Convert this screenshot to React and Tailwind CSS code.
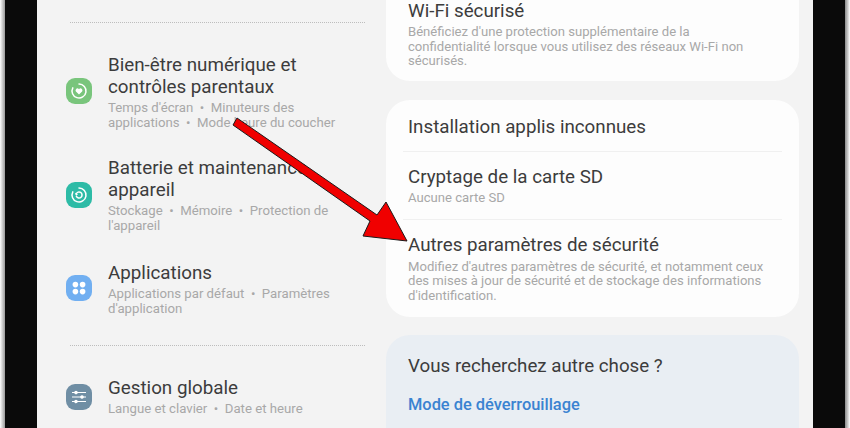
const font = { fontFamily: '"Roboto", sans-serif' };

function Dots({ className }) {
  return <div className={`h-px ml-[33px] w-[295px] border-t border-dotted border-[#bdbdbd] ${className || ""}`} />;
}

function RingIcon({ bg, children }) {
  return (
    <div className={`w-[26px] h-[26px] rounded-[9px] shrink-0 flex items-center justify-center ${bg}`}>
      {children}
    </div>
  );
}

function Item({ title, sub, icon, className, iconClass }) {
  return (
    <div className={`flex items-center pl-[29px] ${className || ""}`}>
      <div className={`w-[42px] shrink-0 ${iconClass || ""}`}>{icon}</div>
      <div className="min-w-0 whitespace-nowrap">
        <div className="text-[18.8px] leading-[22px] text-[#3c3c3c]">{title}</div>
        <div className="text-[13.2px] leading-[14.7px] text-[#a8a8a8] mt-[3px]">{sub}</div>
      </div>
    </div>
  );
}

function Row({ title, sub, border, className, subClass }) {
  return (
    <div className={`mx-[17px] px-[5px] whitespace-nowrap ${border ? "border-t border-[#f0f0f0]" : ""} ${className || ""}`}>
      <div className="text-[18.75px] leading-[22px] text-[#3c3c3c]">{title}</div>
      {sub && <div className={`text-[13.1px] leading-[14.7px] text-[#a8a8a8] ${subClass || "mt-[3px]"}`}>{sub}</div>}
    </div>
  );
}

const Bullet = () => <span className="mx-[6.5px]">•</span>;

export default function App() {
  return (
    <div style={font} className="relative w-[850px] h-[428px] overflow-hidden flex bg-white">
      <div className="w-[5px] bg-gradient-to-r from-white to-[#9a9a9a]" />
      <div className="w-[32px] bg-[#0a0a0a]" />
      <div className="w-[776px] bg-[#f3f3f3] flex">
        <div className="w-[349px] shrink-0 pt-[22px]">
          <Dots />
          <Item
            className="mt-[31px]"
            iconClass="-mt-[3px]"
            title={<>Bien-être numérique et<br />contrôles parentaux</>}
            sub={<>Temps d'écran<Bullet />Minuteurs des<br />applications<Bullet />Mode heure du coucher</>}
            icon={
              <RingIcon bg="bg-[#79c57c]">
                <svg width="18" height="18" viewBox="0 0 18 18" fill="none">
                  <path d="M9 2a7 7 0 1 1-6.2 3.8" stroke="#fff" strokeWidth="1.5" strokeLinecap="round" />
                  <path d="M9 12.4 5.9 9.4a1.9 1.9 0 0 1 2.7-2.6l.4.4.4-.4a1.9 1.9 0 0 1 2.7 2.6z" fill="#fff" />
                </svg>
              </RingIcon>
            }
          />
          <Item
            className="mt-[27px]"
            iconClass="-mt-[2px]"
            title={<>Batterie et maintenance<br />appareil</>}
            sub={<>Stockage<Bullet />Mémoire<Bullet />Protection de<br />l'appareil</>}
            icon={
              <RingIcon bg="bg-[#2dbba6]">
                <svg width="18" height="18" viewBox="0 0 18 18" fill="none">
                  <path d="M9 2a7 7 0 1 1-6.2 3.8" stroke="#fff" strokeWidth="1.5" strokeLinecap="round" />
                  <path d="M6.2 8a3 3 0 1 1 .2 2.4" stroke="#fff" strokeWidth="1.5" strokeLinecap="round" />
                  <path d="M5 6.8 8 8.4 6 9.8z" fill="#fff" />
                </svg>
              </RingIcon>
            }
          />
          <Item
            className="mt-[28px]"
            iconClass="-mt-[2px]"
            title="Applications"
            sub={<>Applications par défaut<Bullet />Paramètres<br />d'application</>}
            icon={
              <RingIcon bg="bg-[#71aff1]">
                <svg width="16" height="16" viewBox="0 0 16 16" fill="#fff">
                  <circle cx="4.4" cy="4.6" r="2.8" />
                  <circle cx="11.6" cy="4.6" r="2.8" />
                  <circle cx="4.4" cy="11.6" r="2.8" />
                  <circle cx="11.6" cy="11.6" r="2.8" />
                </svg>
              </RingIcon>
            }
          />
          <Dots className="mt-[29px]" />
          <Item
            className="mt-[31px]"
            title="Gestion globale"
            sub={<>Langue et clavier<Bullet />Date et heure</>}
            icon={
              <RingIcon bg="bg-[#6f8ea4]">
                <svg width="18" height="18" viewBox="0 0 18 18" fill="none" stroke="#fff" strokeWidth="1.2">
                  <path d="M2 4.5h14M2 9h14M2 13.5h14" />
                  <circle cx="6" cy="4.5" r="1.2" fill="#fff" />
                  <circle cx="12" cy="9" r="1.2" fill="#fff" />
                  <circle cx="6" cy="13.5" r="1.2" fill="#fff" />
                </svg>
              </RingIcon>
            }
          />
        </div>
        <div className="w-[413px] shrink-0 flex flex-col">
          <div className="bg-[#fdfdfd] rounded-b-[24px] h-[81px] overflow-hidden">
            <Row title="Wi-Fi sécurisé" sub={<>Bénéficiez d'une protection supplémentaire de la<br />confidentialité lorsque vous utilisez des réseaux Wi-Fi non<br />sécurisés.</>} />
          </div>
          <div className="bg-[#fdfdfd] rounded-[24px] h-[217px] mt-[19px] pt-[16px]">
            <Row title="Installation applis inconnues" />
            <Row className="mt-[13px] pt-[14px]" border title="Cryptage de la carte SD" sub="Aucune carte SD" />
            <Row className="mt-[13px] pt-[14px]" border subClass="mt-[4px]" title="Autres paramètres de sécurité" sub={<>Modifiez d'autres paramètres de sécurité, et notamment ceux<br />des mises à jour de sécurité et de stockage des informations<br />d'identification.</>} />
          </div>
          <div className="bg-[#e9eef3] rounded-t-[24px] h-[93px] mt-[18px] px-[22px] pt-[20px]">
            <div className="text-[18.75px] leading-[22px] text-[#3c3c3c]">Vous recherchez autre chose ?</div>
            <div className="text-[16.4px] leading-[20px] font-medium text-[#3a83d1] mt-[18px]">Mode de déverrouillage</div>
          </div>
        </div>
      </div>
      <div className="w-[32px] bg-[#0a0a0a]" />
      <div className="w-[5px] bg-gradient-to-r from-[#8a8a8a] to-white" />
      <svg className="absolute left-0 top-0 pointer-events-none" width="850" height="428" viewBox="0 0 850 428">
        <path d="M237 118 L233 125 L370 221 L363 236 L407 241 L386 202 L377 215 Z" fill="#f00000" stroke="#1a1a1a" strokeWidth="1" />
      </svg>
    </div>
  );
}
